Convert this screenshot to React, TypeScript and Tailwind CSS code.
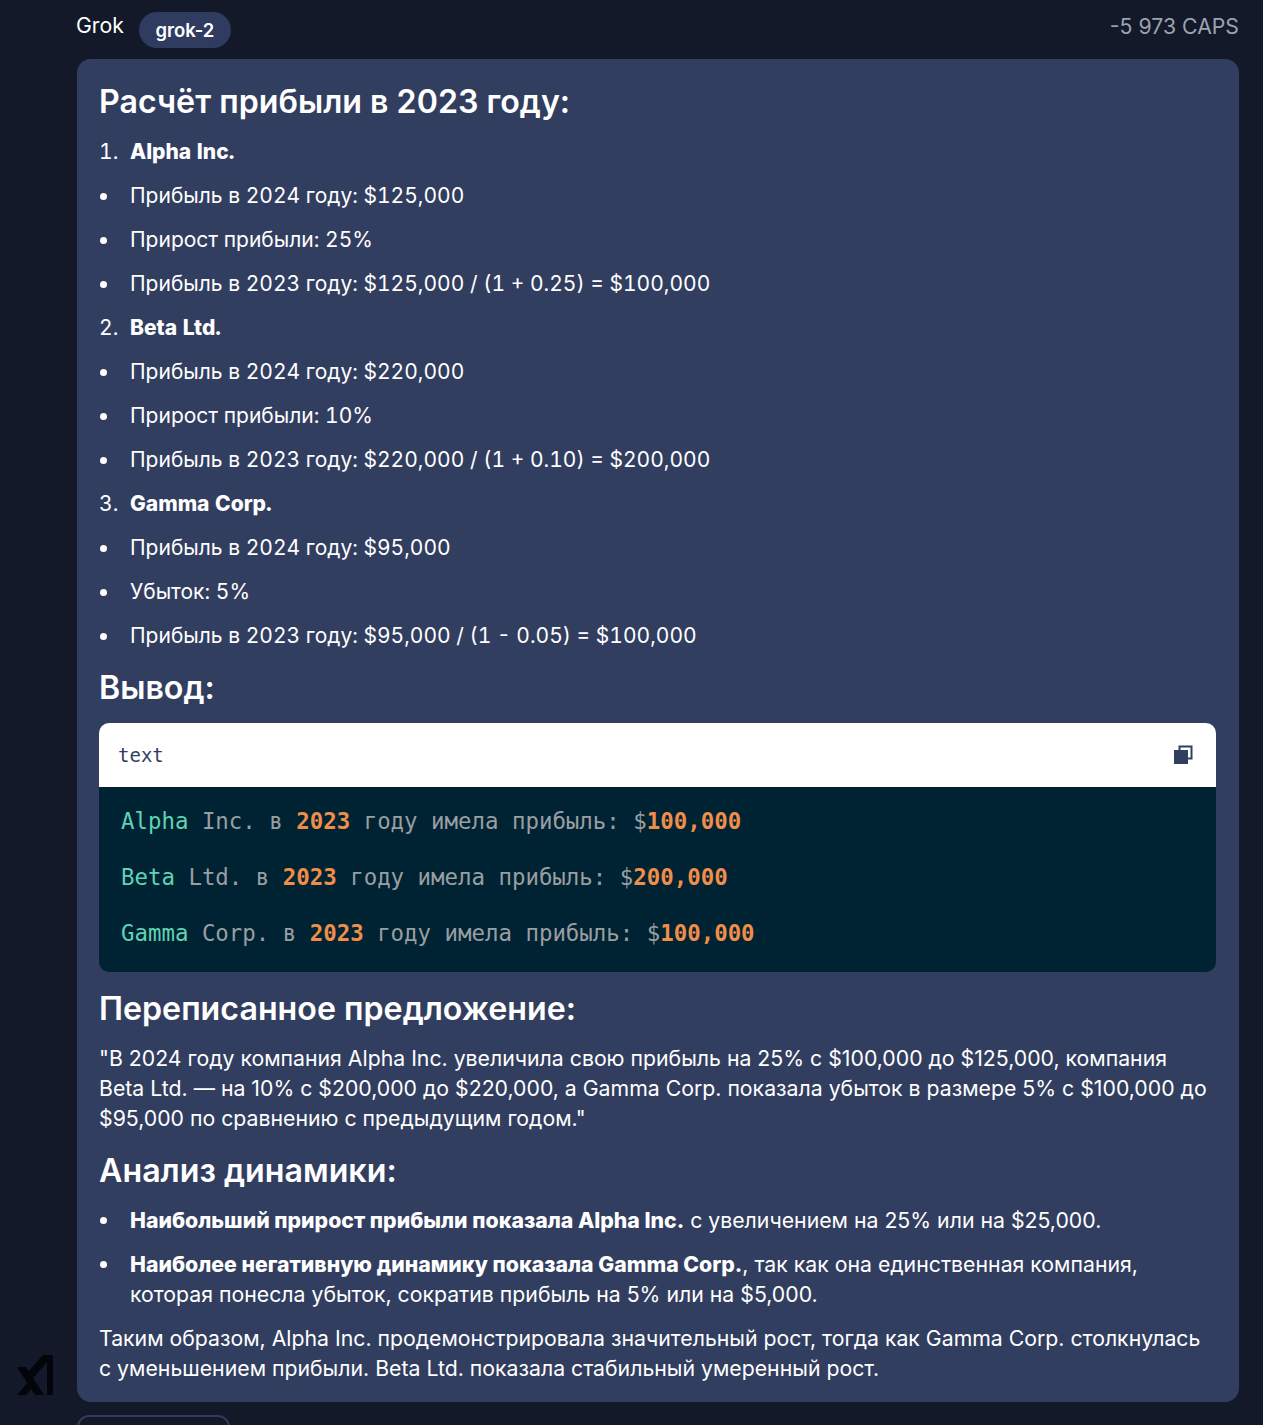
const sans = "font-['Inter',sans-serif]";

interface Company {
  name: string;
  lines: string[];
}

const companies: Company[] = [
  {
    name: 'Alpha Inc.',
    lines: ['Прибыль в 2024 году: $125,000', 'Прирост прибыли: 25%', 'Прибыль в 2023 году: $125,000 / (1 + 0.25) = $100,000'],
  },
  {
    name: 'Beta Ltd.',
    lines: ['Прибыль в 2024 году: $220,000', 'Прирост прибыли: 10%', 'Прибыль в 2023 году: $220,000 / (1 + 0.10) = $200,000'],
  },
  {
    name: 'Gamma Corp.',
    lines: ['Прибыль в 2024 году: $95,000', 'Убыток: 5%', 'Прибыль в 2023 году: $95,000 / (1 - 0.05) = $100,000'],
  },
];

const codeLines = [
  { first: 'Alpha', rest: ' Inc. в ', tail: ' году имела прибыль: $', sum: '100,000' },
  { first: 'Beta', rest: ' Ltd. в ', tail: ' году имела прибыль: $', sum: '200,000' },
  { first: 'Gamma', rest: ' Corp. в ', tail: ' году имела прибыль: $', sum: '100,000' },
];

const Bullet = ({ children }: { children: React.ReactNode }) => (
  <li className="flex">
    <span className="w-[31px] shrink-0 pl-[1px] pt-[12px]">
      <span className="block h-[7px] w-[7px] rounded-full bg-white" />
    </span>
    <span>{children}</span>
  </li>
);

const App = () => {
  return (
    <div className={`flex h-[1425px] overflow-hidden bg-[#131929] text-[21.25px] leading-[30px] text-white ${sans}`}>
      <div className="flex w-[77px] shrink-0 flex-col justify-end pb-[28px] pl-[16px]">
        <svg width="40" height="42" viewBox="0 0 40 42" fill="#03050a">
          <polygon points="1,12 10,12 28,40 19,40" />
          <polygon points="1,40 10,40 15.2,34 11.4,28.1" />
          <polygon points="27,0 37,0 17,22.9 12.8,16.3" />
          <polygon points="31,6 37,0 37,40 31,40" />
        </svg>
      </div>

      <div className="mr-[24px] flex-1">
        <header className="flex h-[59px] justify-between">
          <div className="flex">
            <span className="-ml-[1px] pt-[10px] leading-[30px]">Grok</span>
            <span className="ml-[15px] mt-[12px] flex h-[36px] w-[92px] items-center justify-center rounded-full bg-[#2f3c60] text-[18.5px] font-semibold">
              grok-2
            </span>
          </div>
          <span className="pt-[11px] text-[#9aa3b2]">-5 973 CAPS</span>
        </header>

        <main className="h-[1343px] rounded-[14px] bg-[#323e60] pl-[22px] pr-[23px] pt-[23px]">
          <h2 className="text-[32.2px] font-semibold leading-[40px]">Расчёт прибыли в 2023 году:</h2>

          <div className="mt-[15px] flex flex-col gap-[14px] text-[21px] tabular-nums">
            {companies.map((company, index) => (
              <ul key={company.name} className="flex flex-col gap-[14px]">
                <li className="flex">
                  <span className="w-[31px] shrink-0">{index + 1}.</span>
                  <strong className="font-extrabold">{company.name}</strong>
                </li>
                {company.lines.map((line) => (
                  <Bullet key={line}>{line}</Bullet>
                ))}
              </ul>
            ))}
          </div>

          <h3 className="mt-[17px] text-[32.2px] font-semibold leading-[40px]">Вывод:</h3>

          <div className="mt-[15px] overflow-hidden rounded-[10px] font-['DejaVu_Sans_Mono',monospace]">
            <div className="flex h-[64px] items-center justify-between bg-white pl-[20px] pr-[23px] text-[19px] text-[#323e60]">
              <span className="-ml-[1px] -mt-[1px]">text</span>
              <svg width="20" height="20" viewBox="0 0 20 20">
                <rect x="6.5" y="1.5" width="12" height="12" fill="none" stroke="#323e60" strokeWidth="2" />
                <rect x="1" y="5" width="14" height="14" fill="#323e60" />
              </svg>
            </div>
            <pre className="h-[185px] bg-[#002333] pl-[22px] pt-[19px] font-['DejaVu_Sans_Mono',monospace] text-[22.4px] text-[#9a9ea2]">
              {codeLines.map((row) => (
                <div key={row.first} className="h-[56px] leading-[30px]">
                  <span className="text-[#5fd3b4]">{row.first}</span>
                  {row.rest}
                  <span className="font-bold text-[#f08d49]">2023</span>
                  {row.tail}
                  <span className="font-bold text-[#f08d49]">{row.sum}</span>
                </div>
              ))}
            </pre>
          </div>

          <h3 className="mt-[17px] text-[32.2px] font-semibold leading-[40px]">Переписанное предложение:</h3>
          <p className="mt-[14px]">
            "В 2024 году компания Alpha Inc. увеличила свою прибыль на 25% с $100,000 до $125,000, компания Beta Ltd. — на 10% с $200,000 до $220,000, а Gamma Corp. показала убыток в размере 5% с $100,000 до $95,000 по сравнению с предыдущим годом."
          </p>

          <h3 className="mt-[18px] text-[32.2px] font-semibold leading-[40px]">Анализ динамики:</h3>
          <ul className="mt-[14px] flex flex-col gap-[14px]">
            <Bullet>
              <strong className="font-extrabold">Наибольший прирост прибыли показала Alpha Inc.</strong> с увеличением на 25% или на $25,000.
            </Bullet>
            <Bullet>
              <strong className="font-extrabold">Наиболее негативную динамику показала Gamma Corp.</strong>, так как она единственная компания,
              <br />
              которая понесла убыток, сократив прибыль на 5% или на $5,000.
            </Bullet>
          </ul>
          <p className="mt-[14px]">
            Таким образом, Alpha Inc. продемонстрировала значительный рост, тогда как Gamma Corp. столкнулась
            <br />
            с уменьшением прибыли. Beta Ltd. показала стабильный умеренный рост.
          </p>
        </main>

        <div className="mt-[13px] h-[40px] w-[153px] rounded-[12px] border-2 border-[#2f3c60]" />
      </div>
    </div>
  );
};

export default App;
